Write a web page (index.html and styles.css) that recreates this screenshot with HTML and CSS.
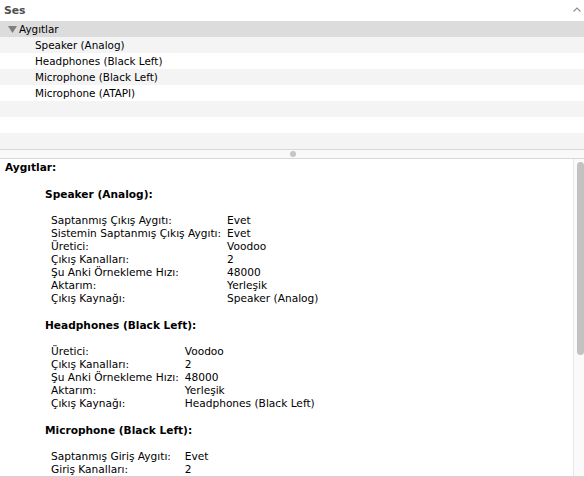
FILE: index.html
```html
<!DOCTYPE html>
<html lang="tr">
<head>
<meta charset="utf-8">
<link rel="stylesheet" href="styles.css">
</head>
<body>
<div class="window">
  <div class="top">
    <div class="header">
      <span class="header-title">Ses</span>
      <svg class="caret" width="8" height="5" viewBox="0 0 8 5"><path d="M0.5 4.5 L4 1 L7.5 4.5" fill="none" stroke="#8e8e8e" stroke-width="1.1"/></svg>
    </div>
    <div class="tree">
      <div class="row selected"><svg class="disclosure" width="9" height="7" viewBox="0 0 9 7"><path d="M0 0 L9 0 L4.5 7 Z" fill="#7f7f7f"/></svg>Aygıtlar</div>
      <div class="row alt child">Speaker (Analog)</div>
      <div class="row child">Headphones (Black Left)</div>
      <div class="row alt child">Microphone (Black Left)</div>
      <div class="row child">Microphone (ATAPI)</div>
      <div class="row alt"></div>
      <div class="row"></div>
      <div class="row alt"></div>
    </div>
  </div>
  <div class="splitter"><span class="dot"></span></div>
  <div class="details">
    <div class="content">
      <div class="title">Aygıtlar:</div>
      <div class="device">
        <div class="dev-name">Speaker (Analog):</div>
        <div class="props">
          <span>Saptanmış Çıkış Aygıtı:</span><span>Evet</span>
          <span>Sistemin Saptanmış Çıkış Aygıtı:</span><span>Evet</span>
          <span>Üretici:</span><span>Voodoo</span>
          <span>Çıkış Kanalları:</span><span>2</span>
          <span>Şu Anki Örnekleme Hızı:</span><span>48000</span>
          <span>Aktarım:</span><span>Yerleşik</span>
          <span>Çıkış Kaynağı:</span><span>Speaker (Analog)</span>
        </div>
      </div>
      <div class="device">
        <div class="dev-name">Headphones (Black Left):</div>
        <div class="props">
          <span>Üretici:</span><span>Voodoo</span>
          <span>Çıkış Kanalları:</span><span>2</span>
          <span>Şu Anki Örnekleme Hızı:</span><span>48000</span>
          <span>Aktarım:</span><span>Yerleşik</span>
          <span>Çıkış Kaynağı:</span><span>Headphones (Black Left)</span>
        </div>
      </div>
      <div class="device">
        <div class="dev-name">Microphone (Black Left):</div>
        <div class="props">
          <span>Saptanmış Giriş Aygıtı:</span><span>Evet</span>
          <span>Giriş Kanalları:</span><span>2</span>
          <span>Şu Anki Örnekleme Hızı:</span><span>48000</span>
        </div>
      </div>
    </div>
    <div class="scrollbar"><div class="thumb"></div></div>
  </div>
</div>
</body>
</html>
```
FILE: styles.css
```css
html, body {
  margin: 0;
  padding: 0;
  background: #ffffff;
}
body {
  width: 584px;
  height: 477px;
  overflow: hidden;
  font-family: "DejaVu Sans", "Liberation Sans", sans-serif;
  font-size: 10.4px;
  color: #000;
}
.window {
  display: flex;
  flex-direction: column;
  height: 477px;
}
.header {
  height: 21px;
  display: flex;
  align-items: center;
  justify-content: space-between;
  padding: 0 3px 0 4px;
  box-sizing: border-box;
}
.header-title {
  font-weight: bold;
  color: #4f4f4f;
  font-size: 10.8px;
}
.caret {
  margin-top: -2px;
}
.row {
  height: 16px;
  line-height: 16px;
  background: #ffffff;
  white-space: nowrap;
}
.row.alt {
  background: #f4f4f5;
}
.row.selected {
  background: #dcdcdc;
  padding-left: 8px;
  display: flex;
  align-items: center;
}
.row.child {
  padding-left: 35px;
}
.disclosure {
  margin-right: 2px;
  margin-top: 1px;
}
.splitter {
  height: 8px;
  border-top: 1px solid #d8d8d8;
  border-bottom: 1px solid #d8d8d8;
  background: #f9f9f9;
  display: flex;
  align-items: center;
  justify-content: center;
}
.dot {
  width: 6px;
  height: 6px;
  border-radius: 50%;
  background: #c5c5c5;
  margin-left: 2px;
}
.details {
  flex: 1;
  display: flex;
  border-bottom: 1px solid #d4d4d4;
  overflow: hidden;
}
.content {
  flex: 1;
  padding: 2px 0 0 5px;
  line-height: 13px;
  font-size: 10.6px;
  overflow: hidden;
}
.title, .dev-name {
  font-weight: bold;
}
.device {
  margin-left: 40px;
}
.dev-name {
  margin-top: 14px;
  margin-bottom: 13px;
}
.device:first-of-type .dev-name {
  margin-top: 18px;
}
.props {
  display: grid;
  grid-template-columns: auto 1fr;
  column-gap: 6px;
  margin-left: 6px;
  white-space: nowrap;
}
.scrollbar {
  width: 11px;
  border-left: 1px solid #e8e8e8;
  background: #fafafa;
  padding: 3px 1px 0 3px;
  box-sizing: border-box;
}
.thumb {
  width: 7px;
  height: 193px;
  border-radius: 4px;
  background: #c2c2c2;
}
```
